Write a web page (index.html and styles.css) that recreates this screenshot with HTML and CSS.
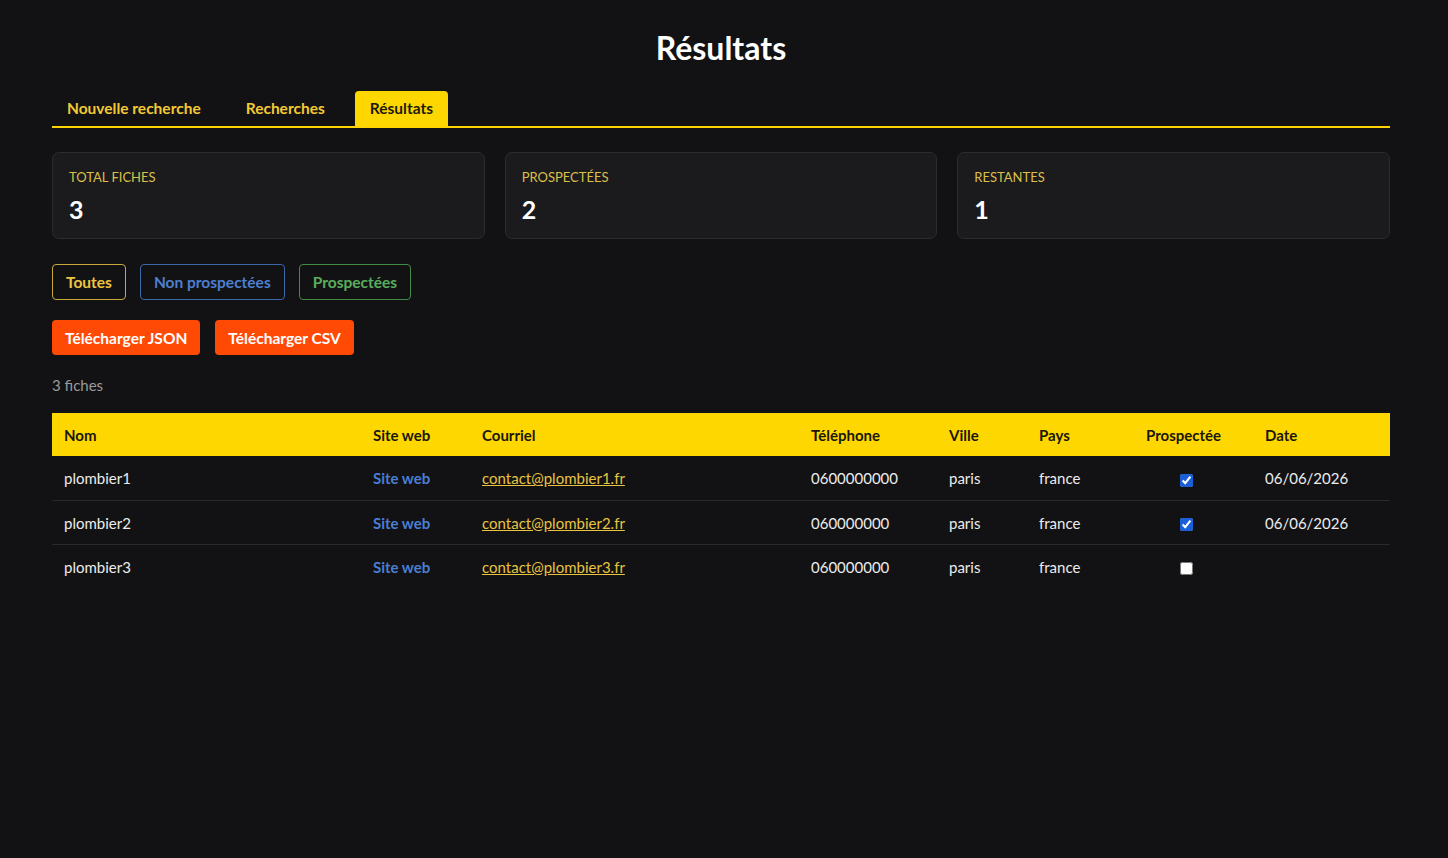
FILE: index.html
```html
<!DOCTYPE html>
<html lang="fr">
<head>
<meta charset="utf-8">
<title>Résultats</title>
<link rel="stylesheet" href="styles.css">
</head>
<body>
<div class="page">
  <h1 class="title">Résultats</h1>
  <nav class="tabs">
    <a class="tab">Nouvelle recherche</a>
    <a class="tab">Recherches</a>
    <a class="tab active">Résultats</a>
  </nav>
  <section class="stats">
    <div class="stat"><div class="stat-label">Total fiches</div><div class="stat-value">3</div></div>
    <div class="stat"><div class="stat-label">Prospectées</div><div class="stat-value">2</div></div>
    <div class="stat"><div class="stat-label">Restantes</div><div class="stat-value">1</div></div>
  </section>
  <div class="filters">
    <button class="filter filter-all">Toutes</button>
    <button class="filter filter-non">Non prospectées</button>
    <button class="filter filter-done">Prospectées</button>
  </div>
  <div class="downloads">
    <button class="dl">Télécharger JSON</button>
    <button class="dl">Télécharger CSV</button>
  </div>
  <p class="count">3 fiches</p>
  <table class="results">
    <colgroup>
      <col class="c-nom"><col class="c-site"><col class="c-mail"><col class="c-tel"><col class="c-ville"><col class="c-pays"><col class="c-prosp"><col class="c-date">
    </colgroup>
    <thead>
      <tr><th>Nom</th><th>Site web</th><th>Courriel</th><th>Téléphone</th><th>Ville</th><th>Pays</th><th>Prospectée</th><th>Date</th></tr>
    </thead>
    <tbody>
      <tr><td>plombier1</td><td><a class="site">Site web</a></td><td><a class="mail">contact@plombier1.fr</a></td><td>0600000000</td><td>paris</td><td>france</td><td class="chk"><input type="checkbox" checked></td><td>06/06/2026</td></tr>
      <tr><td>plombier2</td><td><a class="site">Site web</a></td><td><a class="mail">contact@plombier2.fr</a></td><td>060000000</td><td>paris</td><td>france</td><td class="chk"><input type="checkbox" checked></td><td>06/06/2026</td></tr>
      <tr><td>plombier3</td><td><a class="site">Site web</a></td><td><a class="mail">contact@plombier3.fr</a></td><td>060000000</td><td>paris</td><td>france</td><td class="chk"><input type="checkbox"></td><td></td></tr>
    </tbody>
  </table>
</div>
</body>
</html>
```
FILE: styles.css
```css
* { box-sizing: border-box; }
html, body {
  margin: 0;
  background: #121214;
  color: #ececec;
  font-family: "Lato", "Open Sans", "Liberation Sans", sans-serif;
}
.page {
  width: 1338px;
  margin-left: 52px;
  padding-top: 28px;
}
.title {
  margin: 0;
  text-align: center;
  font-size: 32px;
  line-height: 40px;
  font-weight: 700;
  color: #ffffff;
}
.tabs {
  margin-top: 23px;
  display: flex;
  gap: 15px;
  border-bottom: 2px solid #ffd400;
}
.tab {
  display: block;
  padding: 0 15px;
  height: 35px;
  line-height: 35px;
  font-size: 15.5px;
  font-weight: 700;
  color: #f2c935;
  border-radius: 4px 4px 0 0;
}
.tab.active {
  background: #ffd700;
  color: #1c1a10;
}
.stats {
  margin-top: 24px;
  display: grid;
  grid-template-columns: repeat(3, 1fr);
  gap: 20px;
}
.stat {
  background: #1b1b1e;
  border: 1px solid #2c2c30;
  border-radius: 7px;
  padding: 16px 16px 13px;
}
.stat-label {
  text-transform: uppercase;
  font-size: 13px;
  line-height: 16px;
  color: #dcbf48;
}
.stat-value {
  margin-top: 8px;
  font-size: 25px;
  line-height: 32px;
  font-weight: 700;
  color: #ffffff;
}
.filters {
  margin-top: 25px;
  display: flex;
  gap: 14px;
}
.filter {
  height: 36px;
  padding: 0 13px;
  background: transparent;
  border: 1px solid;
  border-radius: 4px;
  font-family: inherit;
  font-size: 15.5px;
  font-weight: 700;
}
.filter-all { border-color: #c9a93c; color: #ecc63f; }
.filter-non { border-color: #3a67a8; color: #4d7fd0; }
.filter-done { border-color: #3f8a45; color: #5aad5c; }
.downloads {
  margin-top: 20px;
  display: flex;
  gap: 15px;
}
.dl {
  height: 35px;
  padding: 0 13px;
  background: #ff4a05;
  color: #ffffff;
  border: 0;
  border-radius: 4px;
  font-family: inherit;
  font-size: 15.5px;
  font-weight: 700;
}
.count {
  margin: 20px 0 18px;
  font-size: 15px;
  line-height: 20px;
  color: #9a9a9a;
}
.results {
  width: 100%;
  border-collapse: collapse;
  table-layout: fixed;
  font-size: 15px;
}
.c-nom { width: 309px; }
.c-site { width: 109px; }
.c-mail { width: 329px; }
.c-tel { width: 138px; }
.c-ville { width: 90px; }
.c-pays { width: 107px; }
.c-prosp { width: 119px; }
.c-date { width: 137px; }
.results th {
  background: #ffd700;
  color: #1a1708;
  text-align: left;
  font-weight: 700;
  height: 43px;
  padding: 0 12px;
}
.results td {
  height: 44px;
  padding: 1px 12px 0;
  color: #ececec;
  border-bottom: 1px solid #2a2a2c;
}
.results tbody tr:last-child td { border-bottom: 0; }
.site {
  color: #4a7ed2;
  font-weight: 700;
  text-decoration: none;
}
.mail {
  color: #e8c440;
  text-decoration: underline;
}
.chk input {
  margin: 0 0 0 34px;
  width: 13px;
  height: 13px;
  accent-color: #1a5fd6;
  vertical-align: middle;
}
```
